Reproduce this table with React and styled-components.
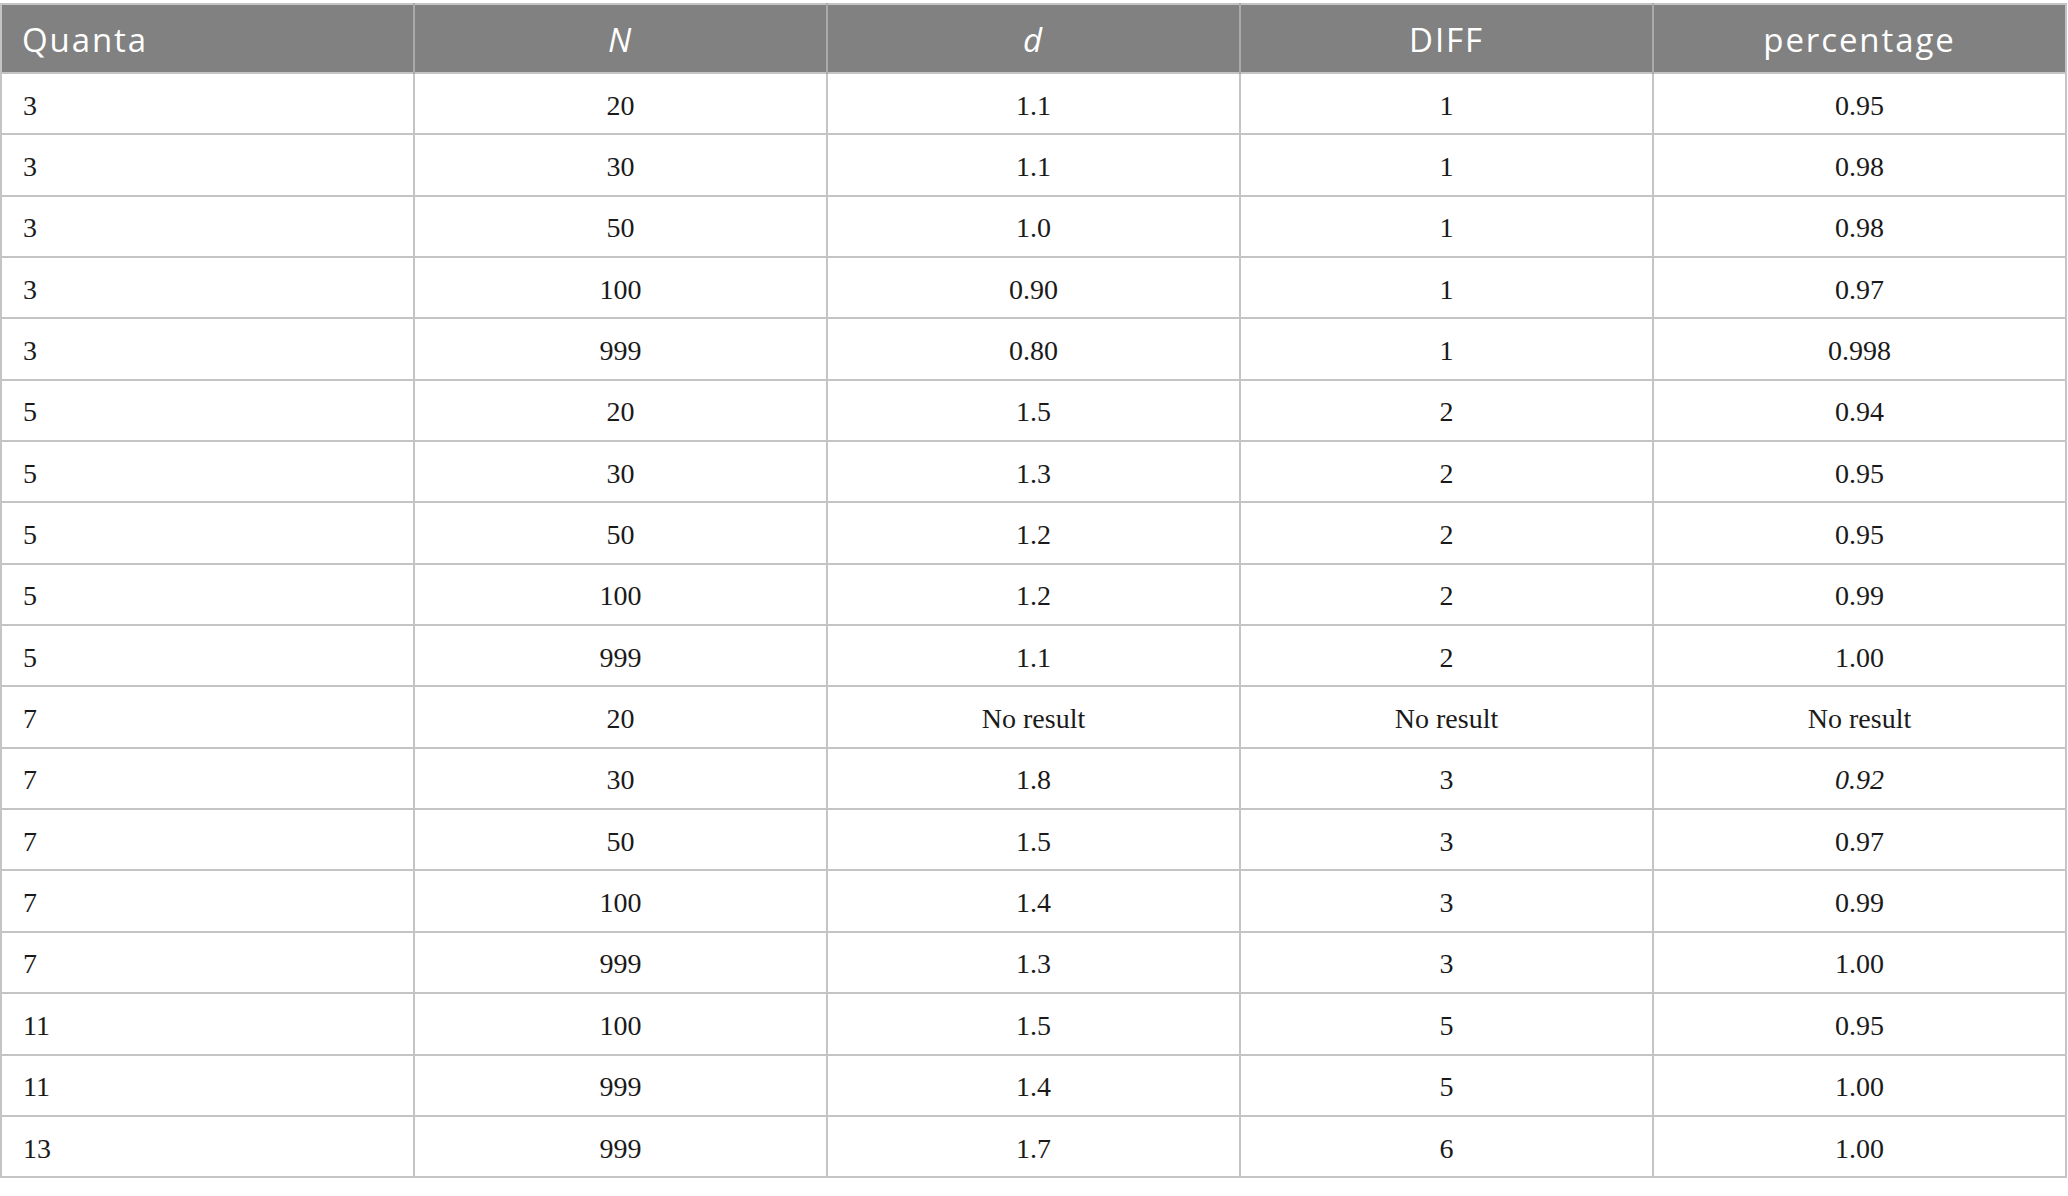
import React from 'react';
import styled, { createGlobalStyle } from 'styled-components';

const GlobalStyle = createGlobalStyle`
    html, body {
        margin: 0;
        padding: 0;
        background: #ffffff;
    }
    body {
        padding-top: 3px;
    }
`;

const columns = [
    { label: 'Quanta', italic: false, align: 'left' },
    { label: 'N', italic: true, align: 'center' },
    { label: 'd', italic: true, align: 'center' },
    { label: 'DIFF', italic: false, align: 'center' },
    { label: 'percentage', italic: false, align: 'center' }
];

// each row: quanta, N, d, DIFF, percentage; a leading "*" marks italic
const rows = [
    ['3', '20', '1.1', '1', '0.95'],
    ['3', '30', '1.1', '1', '0.98'],
    ['3', '50', '1.0', '1', '0.98'],
    ['3', '100', '0.90', '1', '0.97'],
    ['3', '999', '0.80', '1', '0.998'],
    ['5', '20', '1.5', '2', '0.94'],
    ['5', '30', '1.3', '2', '0.95'],
    ['5', '50', '1.2', '2', '0.95'],
    ['5', '100', '1.2', '2', '0.99'],
    ['5', '999', '1.1', '2', '1.00'],
    ['7', '20', 'No result', 'No result', 'No result'],
    ['7', '30', '1.8', '3', '*0.92'],
    ['7', '50', '1.5', '3', '0.97'],
    ['7', '100', '1.4', '3', '0.99'],
    ['7', '999', '1.3', '3', '1.00'],
    ['11', '100', '1.5', '5', '0.95'],
    ['11', '999', '1.4', '5', '1.00'],
    ['13', '999', '1.7', '6', '1.00']
];

const App = () => {
    return (
        <>
            <GlobalStyle />
            <Table>
                <colgroup>
                    {columns.map(c => (
                        <col key={c.label} />
                    ))}
                </colgroup>
                <thead>
                    <HeadRow>
                        {columns.map(c => (
                            <HeadCell key={c.label} $italic={c.italic} $align={c.align}>
                                {c.label}
                            </HeadCell>
                        ))}
                    </HeadRow>
                </thead>
                <tbody>
                    {rows.map((r, i) => (
                        <BodyRow key={i}>
                            {r.map((v, j) => {
                                const italic = v.startsWith('*');
                                return (
                                    <Cell key={j} $align={columns[j].align} $italic={italic}>
                                        {italic ? v.slice(1) : v}
                                    </Cell>
                                );
                            })}
                        </BodyRow>
                    ))}
                </tbody>
            </Table>
        </>
    );
};

const Table = styled.table`
    width: 2067px;
    table-layout: fixed;
    border-collapse: collapse;
    border: 2px solid #c4c4c4;

    col {
        width: 20%;
    }
`;

const HeadRow = styled.tr`
    height: 69px;
    background-color: #808180;
`;

const HeadCell = styled.th`
    padding: 2px 20px 0;
    border-left: 2px solid #a9aaa9;
    color: #ffffff;
    font-family: 'Open Sans', 'Liberation Sans', sans-serif;
    font-size: 33px;
    font-weight: 400;
    letter-spacing: 1.9px;
    font-style: ${p => (p.$italic ? 'italic' : 'normal')};
    text-align: ${p => p.$align};
    vertical-align: middle;

    &:first-child {
        border-left: none;
    }
`;

const BodyRow = styled.tr`
    height: 61.35px;
`;

const Cell = styled.td`
    padding: 4px 21px 0;
    border: 2px solid #c4c4c4;
    color: #1a1a1a;
    font-family: 'Liberation Serif', 'Times New Roman', serif;
    font-size: 28px;
    font-style: ${p => (p.$italic ? 'italic' : 'normal')};
    text-align: ${p => p.$align};
    vertical-align: middle;
`;

export default App;
